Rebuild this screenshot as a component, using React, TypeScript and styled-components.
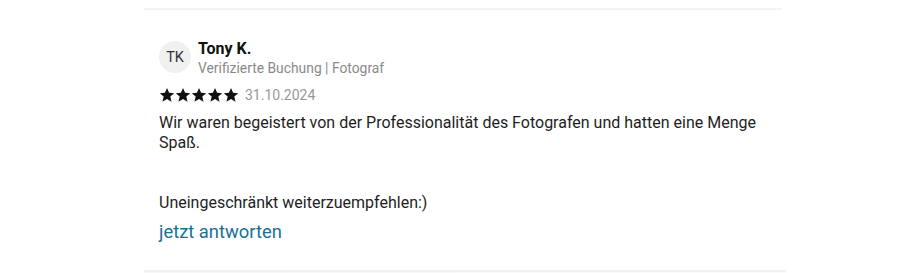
import React from "react";
import styled, { createGlobalStyle } from "styled-components";

const Global = createGlobalStyle`
  html, body { margin: 0; padding: 0; background: #fff; }
  body { font-family: Roboto, "Liberation Sans", Arial, sans-serif; color: #222; }
`;

const Page = styled.div`
  width: 924px;
  height: 273px;
  overflow: hidden;
  padding-top: 8px;
  box-sizing: border-box;
`;

const Card = styled.article`
  margin-left: 144px;
  width: 638px;
  border-top: 2px solid #f4f4f4;
  padding: 30px 15px 27px;
  box-sizing: border-box;
`;

const NextCard = styled.div`
  margin-left: 144px;
  width: 642px;
  height: 4px;
  border-top: 2px solid #f1f1f1;
  background: linear-gradient(to right, #f7f7f7, #fbfbfb);
`;

const Header = styled.div`
  display: flex;
  align-items: flex-start;
  gap: 7px;
`;

const Avatar = styled.div`
  width: 32px;
  height: 32px;
  border-radius: 50%;
  background: #f0f0f1;
  color: #333;
  font-size: 14.5px;
  display: flex;
  align-items: center;
  justify-content: center;
  margin-top: 1px;
`;

const Who = styled.div`
  display: flex;
  flex-direction: column;
`;

const Name = styled.div`
  font-size: 16px;
  font-weight: 700;
  color: #111;
  line-height: 18px;
`;

const Sub = styled.div`
  font-size: 13.85px;
  color: #8a8a8a;
  line-height: 20px;
`;

const RatingRow = styled.div`
  display: flex;
  align-items: center;
  gap: 6px;
  margin-top: 9px;
`;

const Stars = styled.div`
  display: flex;
  gap: 0;
`;

const DateText = styled.span`
  font-size: 14px;
  color: #999;
`;

const Body = styled.p`
  margin: 10px 0 0;
  font-size: 16px;
  line-height: 20px;
  color: #1e1e1e;
  white-space: pre-line;
`;

const Reply = styled.a`
  display: inline-block;
  margin-top: 8px;
  font-size: 18.4px;
  color: #1b7094;
  text-decoration: none;
  line-height: 22px;
`;

const Star = () => (
  <svg width="16" height="16" viewBox="0 0 24 24">
    <path
      fill="#111"
      d="M12 1.5l3.1 7.1 7.7.7-5.8 5.1 1.7 7.6L12 18l-6.7 4 1.7-7.6L1.2 9.3l7.7-.7z"
    />
  </svg>
);

export default function App() {
  return (
    <>
      <Global />
      <Page>
        <Card>
          <Header>
            <Avatar>TK</Avatar>
            <Who>
              <Name>Tony K.</Name>
              <Sub>Verifizierte Buchung | Fotograf</Sub>
            </Who>
          </Header>
          <RatingRow>
            <Stars>
              {[0, 1, 2, 3, 4].map((i) => (
                <Star key={i} />
              ))}
            </Stars>
            <DateText>31.10.2024</DateText>
          </RatingRow>
          <Body>
            {"Wir waren begeistert von der Professionalität des Fotografen und hatten eine Menge Spaß.\n\n\nUneingeschränkt weiterzuempfehlen:)"}
          </Body>
          <Reply href="#">jetzt antworten</Reply>
        </Card>
        <NextCard />
      </Page>
    </>
  );
}
